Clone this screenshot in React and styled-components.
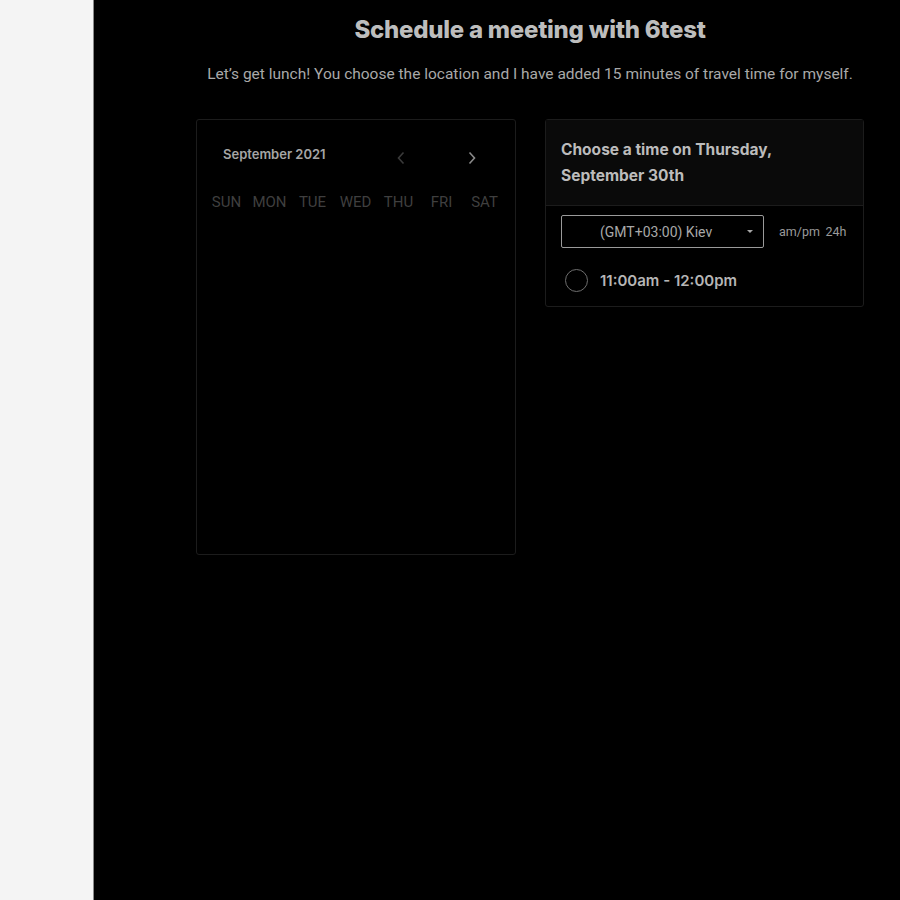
import React from 'react';
import styled, { createGlobalStyle } from 'styled-components';

const GlobalStyle = createGlobalStyle`
  html, body {
    margin: 0;
    padding: 0;
    background: #000;
  }
  body {
    font-family: Roboto, "Liberation Sans", sans-serif;
  }
`;

const Page = styled.div`
  display: flex;
  width: 900px;
  height: 900px;
  overflow: hidden;
`;

const Sidebar = styled.div`
  width: 93px;
  flex-shrink: 0;
  background: #f4f4f4;
  border-right: 1px solid #8a8a8a;
`;

const Main = styled.div`
  flex: 1;
  background: #000;
`;

const Content = styled.div`
  width: 668px;
  margin-left: 102px;
  padding-top: 14px;
`;

const Title = styled.h1`
  margin: 0;
  text-align: center;
  font-family: Inter, "Noto Sans", sans-serif;
  font-weight: 800;
  font-size: 24px;
  line-height: 32px;
  letter-spacing: -0.25px;
  color: #bdbdbd;
`;

const Subtitle = styled.p`
  margin: 19px 0 0;
  text-align: center;
  font-size: 15.5px;
  line-height: 18px;
  color: #a9a9a9;
`;

const Columns = styled.div`
  display: grid;
  grid-template-columns: 320px 319px;
  gap: 29px;
  margin-top: 36px;
  align-items: start;
`;

const Card = styled.div`
  border: 1px solid #1c1c1c;
  border-radius: 3px;
  height: ${p => p.height || 'auto'};
  box-sizing: border-box;
`;

const MonthRow = styled.div`
  display: flex;
  align-items: center;
  padding: 23px 36px 0 26px;
  height: 22px;
`;

const MonthLabel = styled.div`
  font-family: Inter, "Noto Sans", sans-serif;
  font-weight: 600;
  font-size: 13px;
  color: #a5a5a5;
  flex: 1;
`;

const Arrow = styled.span`
  display: flex;
  width: 14px;
  justify-content: center;
  margin-left: ${p => p.gap || '0'};
  margin-top: 8px;
  color: ${p => (p.dim ? '#3a3a3a' : '#8a8a8a')};
`;

const WeekRow = styled.div`
  display: grid;
  grid-template-columns: repeat(7, 1fr);
  padding: 0 9px 0 8px;
  margin-top: 28px;
`;

const WeekDay = styled.div`
  text-align: center;
  font-size: 15px;
  color: #3f3f3f;
`;

const ChooseHeader = styled.div`
  background: #0a0a0a;
  padding: 17px 15px 16px;
  border-bottom: 1px solid #1c1c1c;
  font-family: Inter, "Noto Sans", sans-serif;
  font-weight: 700;
  font-size: 15.5px;
  line-height: 26px;
  color: #bcbcbc;
`;

const ZoneRow = styled.div`
  display: flex;
  align-items: center;
  padding: 9px 15px 0 15px;
`;

const ZoneSelect = styled.div`
  width: 203px;
  height: 33px;
  box-sizing: border-box;
  border: 1px solid #9a9a9a;
  border-radius: 2px;
  display: flex;
  align-items: center;
  padding: 0 10px 0 38px;
  font-size: 14px;
  color: #a8a8a8;
`;

const ZoneText = styled.span`
  flex: 1;
`;

const Caret = styled.span`
  width: 0;
  height: 0;
  border-left: 3px solid transparent;
  border-right: 3px solid transparent;
  border-top: 3px solid #a8a8a8;
`;

const Format = styled.div`
  margin-left: 15px;
  font-size: 12.5px;
  color: #9a9a9a;
  white-space: nowrap;
  word-spacing: 2.5px;
`;

const SlotRow = styled.div`
  display: flex;
  align-items: center;
  padding: 21px 16px 14px 19px;
`;

const Radio = styled.span`
  width: 23px;
  height: 23px;
  border-radius: 50%;
  border: 1.5px solid #6e6e6e;
  box-sizing: border-box;
`;

const SlotLabel = styled.span`
  margin-left: 12px;
  font-family: Inter, "Noto Sans", sans-serif;
  font-weight: 600;
  font-size: 15px;
  color: #b5b5b5;
`;

const Chevron = ({ left }) => (
  <svg width="10" height="14" viewBox="0 0 10 14" fill="none">
    <path
      d={left ? 'M7.5 1.5 L2.5 7 L7.5 12.5' : 'M2.5 1.5 L7.5 7 L2.5 12.5'}
      stroke="currentColor"
      strokeWidth="1.6"
    />
  </svg>
);

const days = ['SUN', 'MON', 'TUE', 'WED', 'THU', 'FRI', 'SAT'];

export default function App() {
  return (
    <>
      <GlobalStyle />
      <Page>
        <Sidebar />
        <Main>
          <Content>
            <Title>Schedule a meeting with 6test</Title>
            <Subtitle>
              Let’s get lunch! You choose the location and I have added 15 minutes of travel time for myself.
            </Subtitle>
            <Columns>
              <Card height="436px">
                <MonthRow>
                  <MonthLabel>September 2021</MonthLabel>
                  <Arrow dim>
                    <Chevron left />
                  </Arrow>
                  <Arrow gap="57px">
                    <Chevron />
                  </Arrow>
                </MonthRow>
                <WeekRow>
                  {days.map(d => (
                    <WeekDay key={d}>{d}</WeekDay>
                  ))}
                </WeekRow>
              </Card>
              <Card>
                <ChooseHeader>
                  Choose a time on Thursday,
                  <br />
                  September 30th
                </ChooseHeader>
                <ZoneRow>
                  <ZoneSelect>
                    <ZoneText>(GMT+03:00) Kiev</ZoneText>
                    <Caret />
                  </ZoneSelect>
                  <Format>am/pm 24h</Format>
                </ZoneRow>
                <SlotRow>
                  <Radio />
                  <SlotLabel>11:00am - 12:00pm</SlotLabel>
                </SlotRow>
              </Card>
            </Columns>
          </Content>
        </Main>
      </Page>
    </>
  );
}
